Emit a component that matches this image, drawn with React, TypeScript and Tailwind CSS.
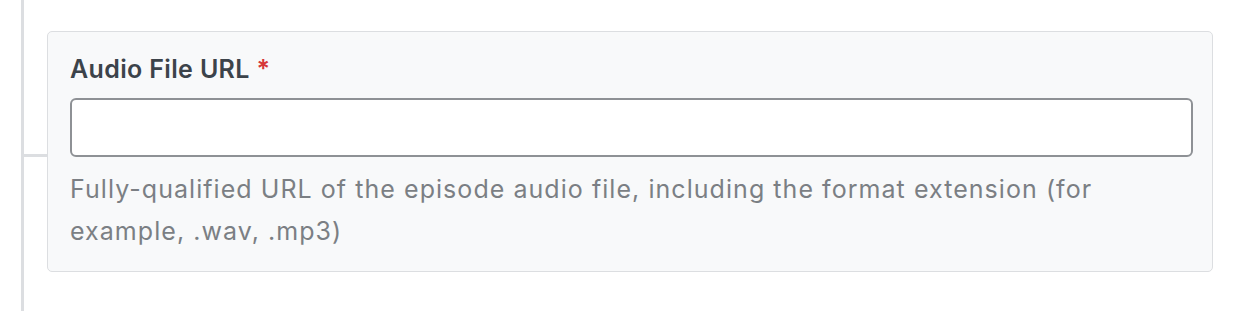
export default function App() {
  return (
    <div
      className="flex h-[311px] w-[1250px] overflow-hidden bg-white"
      style={{ fontFamily: "Inter, 'Noto Sans', 'Liberation Sans', sans-serif" }}
    >
      <div className="ml-[21px] h-full w-[3px] shrink-0 bg-[#dcdee1]" />
      <div className="mt-[154px] h-[3px] w-[23px] shrink-0 bg-[#dcdee1]" />
      <div className="mt-[31px] h-[241px] w-[1166px] shrink-0 self-start rounded-[5px] border border-[#dcdee1] bg-[#f8f9fa] pl-[22px] pr-[19px] pt-[22px]">
        <label className="block text-[25px] font-semibold leading-[30px] tracking-[0.35px] text-[#3c434a]">
          Audio File URL <span className="text-[#d63638]">*</span>
        </label>
        <input
          type="text"
          className="mt-[14px] block h-[59px] w-full rounded-[6px] border-2 border-[#8e9195] bg-white outline-none"
        />
        <p className="mt-[11px] max-w-[1100px] text-[25px] leading-[42px] tracking-[1.05px] text-[#7b7f84]">
          Fully-qualified URL of the episode audio file, including the format extension (for example, .wav, .mp3)
        </p>
      </div>
    </div>
  );
}
